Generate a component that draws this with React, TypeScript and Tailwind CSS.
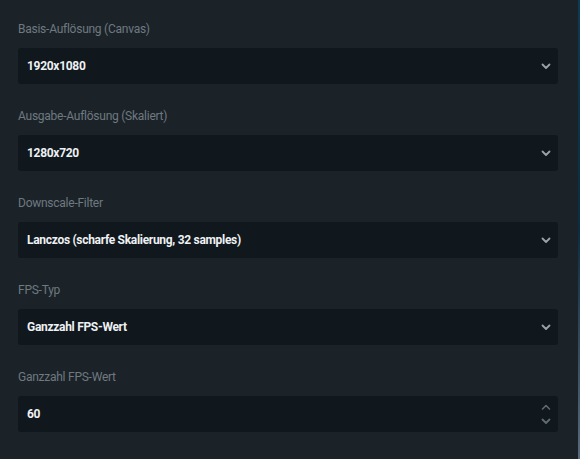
import React from "react"

const fields = [
    { label: "Basis-Auflösung (Canvas)", value: "1920x1080", type: "select" },
    { label: "Ausgabe-Auflösung (Skaliert)", value: "1280x720", type: "select" },
    { label: "Downscale-Filter", value: "Lanczos (scharfe Skalierung, 32 samples)", type: "select" },
    { label: "FPS-Typ", value: "Ganzzahl FPS-Wert", type: "select" },
    { label: "Ganzzahl FPS-Wert", value: "60", type: "number" },
]

const ChevronDown = ({ className }: { className?: string }) => (
    <svg width="10" height="7" viewBox="0 0 10 7" className={className}>
        <path d="M1.5 1.5 L5 5 L8.5 1.5" fill="none" stroke="currentColor" strokeWidth="1.8" strokeLinecap="round" strokeLinejoin="round" />
    </svg>
)

const ChevronUp = ({ className }: { className?: string }) => (
    <svg width="10" height="7" viewBox="0 0 10 7" className={className}>
        <path d="M1.5 5 L5 1.5 L8.5 5" fill="none" stroke="currentColor" strokeWidth="1.6" strokeLinecap="round" strokeLinejoin="round" />
    </svg>
)

export default function App() {
    return (
        <div className="flex h-[459px] w-[580px] bg-[#1b2329]" style={{ fontFamily: "Roboto, 'Liberation Sans', sans-serif" }}>
            <div className="flex flex-1 flex-col gap-6 pl-[18px] pr-[20px] pt-[21px]">
                {fields.map((f, i) => (
                    <div key={i} className="flex flex-col gap-[11px]">
                        <p className="text-[12px] leading-[16px] tracking-[-0.25px] text-[#6f7980]">{f.label}</p>
                        <div className="flex h-9 items-center justify-between rounded-[3px] bg-[#10171d] pl-[9px] pr-[7px]">
                            <span className="text-[12px] font-bold tracking-[-0.3px] text-[#eef1f3]">{f.value}</span>
                            {f.type === "select" ? (
                                <ChevronDown className="text-[#9aa3aa]" />
                            ) : (
                                <div className="flex flex-col gap-[7px]">
                                    <ChevronUp className="text-[#5f6a72]" />
                                    <ChevronDown className="text-[#5f6a72]" />
                                </div>
                            )}
                        </div>
                    </div>
                ))}
            </div>
            <div className="w-[2px] bg-linear-to-b from-[#0c3b53] via-[#0a2d41] to-[#5a6a7e]" />
        </div>
    )
}
